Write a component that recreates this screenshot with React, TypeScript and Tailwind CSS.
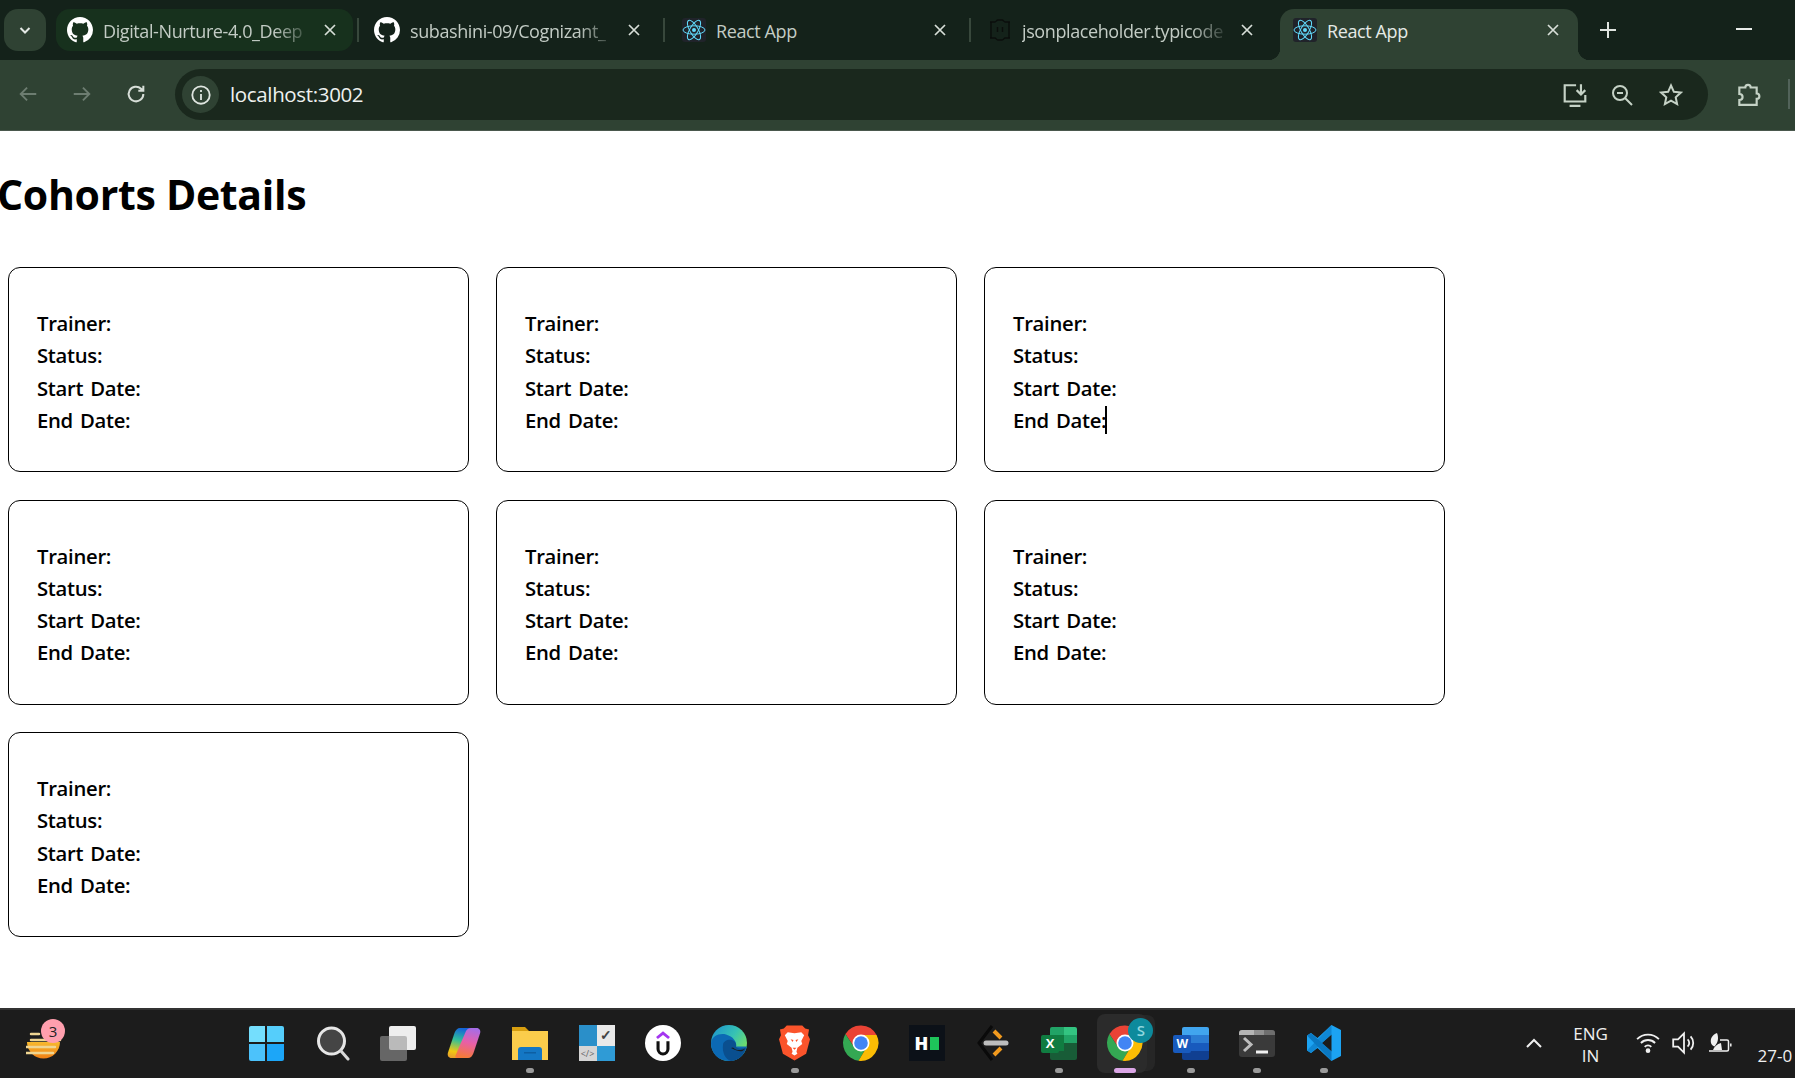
import type { ReactNode } from "react";

const FONT = "font-['Open_Sans','Noto_Sans',sans-serif]";

function GithubIcon() {
  return (
    <svg viewBox="0 0 16 16" className="h-[26px] w-[26px] shrink-0" fill="#fff">
      <path d="M8 0C3.58 0 0 3.58 0 8c0 3.54 2.29 6.53 5.47 7.59.4.07.55-.17.55-.38 0-.19-.01-.82-.01-1.49-2.01.37-2.53-.49-2.69-.94-.09-.23-.48-.94-.82-1.13-.28-.15-.68-.52-.01-.53.63-.01 1.08.58 1.23.82.72 1.21 1.87.87 2.33.66.07-.52.28-.87.51-1.07-1.78-.2-3.64-.89-3.64-3.95 0-.87.31-1.59.82-2.15-.08-.2-.36-1.02.08-2.12 0 0 .67-.21 2.2.82.64-.18 1.32-.27 2-.27s1.36.09 2 .27c1.53-1.04 2.2-.82 2.2-.82.44 1.1.16 1.92.08 2.12.51.56.82 1.27.82 2.15 0 3.07-1.87 3.75-3.65 3.95.29.25.54.73.54 1.48 0 1.07-.01 1.93-.01 2.2 0 .21.15.46.55.38A8.01 8.01 0 0 0 16 8c0-4.42-3.58-8-8-8z" />
    </svg>
  );
}

function ReactIcon() {
  return (
    <span className="flex h-6 w-6 shrink-0 items-center justify-center rounded-[3px] bg-[#20232a]">
      <svg viewBox="-12 -12 24 24" className="h-6 w-6" fill="none" stroke="#61dafb" strokeWidth="1">
        <circle r="2" fill="#61dafb" stroke="none" />
        <ellipse rx="11" ry="4.2" />
        <ellipse rx="11" ry="4.2" transform="rotate(60)" />
        <ellipse rx="11" ry="4.2" transform="rotate(120)" />
      </svg>
    </span>
  );
}

function JsonIcon() {
  return (
    <svg viewBox="0 0 24 24" className="h-6 w-6 shrink-0" fill="none" stroke="#0b0e0c" strokeWidth="1.4">
      <path d="M2 4h5c1 0 1.500-2 3-2h4c1.500 0 2 2 3 2h5M2 20h5c1 0 1.500 2 3 2h4c1.500 0 2-2 3-2h5" />
      <path d="M3 4v16M21 4v16M9.500 9v5M14.500 9v5" />
    </svg>
  );
}

function CloseIcon() {
  return (
    <svg viewBox="0 0 16 16" className="h-4 w-4 shrink-0" fill="none" stroke="#d7ded8" strokeWidth="1.7">
      <path d="M3 3l10 10M13 3L3 13" />
    </svg>
  );
}

function Tab({
  icon,
  title,
  className,
  active,
  clipped,
}: {
  icon: ReactNode;
  title: string;
  className: string;
  active?: boolean;
  clipped?: boolean;
}) {
  return (
    <div className={`relative flex items-center ${className}`}>
      {icon}
      <span
        className={`ml-[10px] mt-[2px] min-w-0 flex-1 overflow-hidden whitespace-nowrap text-[18px] tracking-[-0.4px] ${
          active ? "text-[#e5eae6]" : "text-[#c3ccc5]"
        } ${clipped ? "[mask-image:linear-gradient(to_right,black_78%,transparent_96%)]" : ""}`}
      >
        {title}
      </span>
      <CloseIcon />
      {active && (
        <>
          <span className="absolute -left-[12px] bottom-0 h-3 w-3 bg-[radial-gradient(circle_at_0_0,#14221a_12px,#2f4233_12.5px)]" />
          <span className="absolute -right-[12px] bottom-0 h-3 w-3 bg-[radial-gradient(circle_at_100%_0,#14221a_12px,#2f4233_12.5px)]" />
        </>
      )}
    </div>
  );
}

function Sep() {
  return <div className="mt-[9px] h-[24px] w-[2px] shrink-0 bg-[#38483c]" />;
}

function TabStrip() {
  return (
    <div className="flex h-[60px] items-start bg-[#14221a] pt-[9px]">
      <div className="ml-1 flex h-[42px] w-[42px] items-center justify-center rounded-[14px] bg-[#2f4233]">
        <svg viewBox="0 0 16 16" className="h-4 w-4" fill="none" stroke="#e4e9e5" strokeWidth="2">
          <path d="M3.500 6l4.500 4.500L12.500 6" />
        </svg>
      </div>
      <Tab
        icon={<GithubIcon />}
        title="Digital-Nurture-4.0_Deep"
        clipped
        className="ml-[10px] h-[42px] w-[297px] rounded-[14px] bg-[#17311d] pl-[11px] pr-[15px]"
      />
      <div className="ml-[4px]"><Sep /></div>
      <Tab
        icon={<GithubIcon />}
        title="subashini-09/Cognizant_"
        clipped
        className="h-[42px] w-[304px] pl-[15px] pr-[21px]"
      />
      <Sep />
      <Tab
        icon={<ReactIcon />}
        title="React App"
        className="h-[42px] w-[304px] pl-[17px] pr-[21px]"
      />
      <Sep />
      <Tab
        icon={<JsonIcon />}
        title="jsonplaceholder.typicode"
        clipped
        className="h-[42px] w-[311px] pl-[17px] pr-[27px]"
      />
      <Tab
        icon={<ReactIcon />}
        title="React App"
        active
        className="-ml-[2px] h-[51px] w-[298px] rounded-t-[14px] bg-[#2f4233] pb-[9px] pl-[13px] pr-[17px]"
      />
      <svg viewBox="0 0 20 20" className="ml-[20px] mt-[11px] h-5 w-5" fill="none" stroke="#dfe5e0" strokeWidth="2">
        <path d="M10 2v16M2 10h16" />
      </svg>
      <div className="ml-[118px] mt-[19px] h-[2px] w-[16px] bg-[#e8ece9]" />
    </div>
  );
}

function Toolbar() {
  return (
    <div className="flex h-[71px] items-start border-b border-b-[#4a584d] bg-[#2f4233] pt-[9px]">
      <svg viewBox="0 0 24 24" className="ml-[17px] mt-[14px] h-[22px] w-[22px]" fill="none" stroke="#6d7d71" strokeWidth="2">
        <path d="M21 12H4M11 5l-7 7 7 7" />
      </svg>
      <svg viewBox="0 0 24 24" className="ml-[32px] mt-[14px] h-[22px] w-[22px]" fill="none" stroke="#6d7d71" strokeWidth="2">
        <path d="M3 12h17M13 5l7 7-7 7" />
      </svg>
      <svg viewBox="0 0 24 24" className="ml-[32px] mt-[14px] h-[22px] w-[22px]" fill="none" stroke="#d7ded8" strokeWidth="2.2">
        <path d="M20 12a8 8 0 1 1-2.500-5.800L20 8.500M20 3v5.500h-5.500" />
      </svg>
      <div className="ml-[28px] flex h-[51px] w-[1533px] items-center rounded-full bg-[#1a281d] pl-[7px] pr-[25px]">
        <div className="flex h-[37px] w-[37px] items-center justify-center rounded-full bg-[#2f4233]">
          <svg viewBox="0 0 24 24" className="h-[22px] w-[22px]" fill="none" stroke="#dfe5e0" strokeWidth="2">
            <circle cx="12" cy="12" r="9.500" />
            <path d="M12 11v6.500M12 6.500v2.200" />
          </svg>
        </div>
        <span className="ml-[11px] flex-1 text-[20.5px] tracking-[-0.35px] text-[#eef1ef]">localhost:3002</span>
        <svg viewBox="0 0 24 24" className="h-[26px] w-[26px]" fill="none" stroke="#c5d2c6" strokeWidth="2">
          <path d="M13 3H2.500v15h19v-6M7 22h10M17.500 2v9M13.500 7.500l4 4 4-4" />
        </svg>
        <svg viewBox="0 0 24 24" className="ml-[22px] h-[24px] w-[24px]" fill="none" stroke="#c5d2c6" strokeWidth="2">
          <circle cx="10" cy="10" r="7" />
          <path d="M15 15l7 7M7 10h6" />
        </svg>
        <svg viewBox="0 0 24 24" className="ml-[25px] h-[24px] w-[24px]" fill="none" stroke="#c5d2c6" strokeWidth="2">
          <path d="M12 2.500l2.900 6.300 6.900.8-5.100 4.700 1.400 6.800-6.100-3.400-6.100 3.400 1.400-6.800-5.100-4.700 6.900-.8z" />
        </svg>
      </div>
      <svg viewBox="0 0 24 24" className="ml-[27px] mt-[12px] h-[26px] w-[26px]" fill="none" stroke="#c5d2c6" strokeWidth="2">
        <path d="M4 6h5.500a2.500 2.500 0 0 1 5 0H20v5.500a2.500 2.500 0 0 1 0 5V22H4v-4.500c2 0 3-1.300 3-2.800S6 12 4 12z" />
      </svg>
      <div className="ml-[27px] mt-[10px] h-[30px] w-[2px] bg-[#52635a]" />
    </div>
  );
}

function CohortCard({ caret }: { caret?: boolean }) {
  return (
    <div className="h-[205px] rounded-xl border border-black pl-[28px] pt-[39px] text-[20.3px] font-semibold leading-[32.3px] tracking-[-0.3px] text-black [word-spacing:2px]">
      <div>Trainer:</div>
      <div>Status:</div>
      <div>Start Date:</div>
      <div className="flex items-center">
        End Date:
        {caret && <span className="-ml-px h-[28px] w-[2px] bg-black" />}
      </div>
    </div>
  );
}

function Page() {
  return (
    <main className="flex-1 overflow-hidden bg-white">
      <h1 className="-ml-[3px] mt-[35px] text-[41px] font-bold leading-[57px] tracking-[-0.3px] text-black">Cohorts Details</h1>
      <div className="mt-[44px] grid grid-cols-[repeat(3,461px)] gap-x-[27px] gap-y-[27.5px] pl-2">
        <CohortCard />
        <CohortCard />
        <CohortCard caret />
        <CohortCard />
        <CohortCard />
        <CohortCard />
        <CohortCard />
      </div>
    </main>
  );
}

function WindowsLogo() {
  return (
    <div className="grid h-[35px] w-[35px] grid-cols-2 gap-[2px]">
      <div className="rounded-tl-[2px] bg-[#74defd]" />
      <div className="rounded-tr-[2px] bg-[#55cefb]" />
      <div className="rounded-bl-[2px] bg-[#4cc2fb]" />
      <div className="rounded-br-[2px] bg-[#1ca6f8]" />
    </div>
  );
}

function ChromeLogo() {
  return (
    <svg viewBox="0 0 36 36" className="h-[36px] w-[36px]">
      <path d="M18 10h15.600A18 18 0 0 0 2.400 9L11 22z" fill="#ea4335" />
      <path d="M2.400 9a18 18 0 0 0 13.100 26.800L22 25l-11-3z" fill="#34a853" />
      <path d="M33.600 10a18 18 0 0 1-18.100 25.800L22 25l3-11-7-4z" fill="#fbbc04" />
      <circle cx="18" cy="18" r="8.500" fill="#fff" />
      <circle cx="18" cy="18" r="6.800" fill="#4285f4" />
    </svg>
  );
}

const taskItems: { key: string; dot?: boolean; node: ReactNode }[] = [
  { key: "start", node: <WindowsLogo /> },
  {
    key: "search",
    node: (
      <svg viewBox="0 0 36 36" className="h-[36px] w-[36px]" fill="none">
        <circle cx="17.500" cy="16" r="13" fill="#454545" stroke="#e6e6e6" strokeWidth="3" />
        <path d="M27 26l7 8" stroke="#d8d8d8" strokeWidth="3" strokeLinecap="round" />
      </svg>
    ),
  },
  {
    key: "taskview",
    node: (
      <div className="relative h-[35px] w-[36px]">
        <div className="absolute right-0 top-0 h-[24px] w-[27px] rounded-[2px] bg-[#eeeeee]" />
        <div className="absolute bottom-0 left-0 h-[25px] w-[27px] rounded-[2px] bg-[#989898]/60" />
      </div>
    ),
  },
  {
    key: "copilot",
    node: (
      <svg viewBox="0 0 36 36" className="h-[36px] w-[36px]">
        <defs>
          <linearGradient id="cpa" x1="0.5" y1="0" x2="0.3" y2="1">
            <stop offset="0" stopColor="#1463d8" />
            <stop offset="0.4" stopColor="#2fbf9a" />
            <stop offset="0.8" stopColor="#f2c811" />
            <stop offset="1" stopColor="#e8a02c" />
          </linearGradient>
          <linearGradient id="cpb" x1="0.5" y1="0" x2="0.3" y2="1">
            <stop offset="0" stopColor="#f57a3a" />
            <stop offset="0.5" stopColor="#e85fa8" />
            <stop offset="1" stopColor="#a46de8" />
          </linearGradient>
        </defs>
        <path d="M14 3h11c1.500 0 2 1 1.500 2.500L16 30c-1 2-3 3-5 3H5.500c-3 0-4.500-2.500-3.500-5.500L8.500 8c1-3 3-5 5.500-5z" fill="url(#cpa)" />
        <path d="M14 3h11c1.500 0 2 1 1.500 2.500L16 30c-1 2-3 3-5 3H5.500c-3 0-4.500-2.500-3.500-5.500L8.500 8c1-3 3-5 5.500-5z" fill="url(#cpb)" transform="rotate(180 18 18)" />
      </svg>
    ),
  },
  {
    key: "explorer",
    dot: true,
    node: (
      <svg viewBox="0 0 36 36" className="h-[36px] w-[36px]">
        <path d="M0 2h13l4 4v6H0z" fill="#d79e0f" />
        <path d="M0 6h36v29H0z" fill="#fbcd4b" />
        <path d="M6 25c0-2 1-3 3-3h18c2 0 3 1 3 3v10H6z" fill="#1477c4" />
        <path d="M12 27h12v1.500H12z" fill="#0d5fa3" />
      </svg>
    ),
  },
  {
    key: "devtool",
    node: (
      <div className="grid h-[36px] w-[36px] grid-cols-2">
        <div className="bg-[#2a8fc9]" />
        <div className="flex items-center justify-center bg-[#e9e9e9] text-[14px] font-bold leading-none text-[#444]">✓</div>
        <div className="flex items-center justify-center bg-[#d5d5d5] text-[9px] leading-none text-[#666]">&lt;/&gt;</div>
        <div className="bg-[#2f9bd6]" />
      </div>
    ),
  },
  {
    key: "udemy",
    node: (
      <div className="flex h-[36px] w-[36px] flex-col items-center justify-center rounded-full bg-white">
        <svg viewBox="0 0 20 24" className="h-[27px] w-[22px]" fill="none">
          <path d="M4.500 7l5.500-4.500L15.500 7" stroke="#a435f0" strokeWidth="2.600" />
          <path d="M5.500 10v7a4.500 4.500 0 0 0 9 0v-7" stroke="#111" strokeWidth="2.800" />
        </svg>
      </div>
    ),
  },
  {
    key: "edge",
    node: (
      <svg viewBox="0 0 36 36" className="h-[36px] w-[36px]">
        <defs>
          <linearGradient id="edg" x1="0" y1="0" x2="1" y2="0.7">
            <stop offset="0" stopColor="#1a8fd0" />
            <stop offset="0.55" stopColor="#36c2b4" />
            <stop offset="1" stopColor="#7de35b" />
          </linearGradient>
        </defs>
        <circle cx="18" cy="18" r="18" fill="url(#edg)" />
        <path d="M0 18C1 11 8 8 15 9.500c7 2 11 7 10 12h11C34 30 27 36 18 36 7 36 0 28 0 18z" fill="#0c69b4" />
        <path d="M12 20c0-4 5-6 9-5 3 1 5 4 4 7 3 2 7 2 10 .5C33 31 26 36 20 36c-6-2-9-9-8-16z" fill="#0a4f8f" />
        <path d="M22 22.500c2.500 3 8 3.500 12 1-1 1-2 6-14-.5z" fill="#1c1c1c" />
      </svg>
    ),
  },
  {
    key: "brave",
    dot: true,
    node: (
      <svg viewBox="0 0 32 36" className="h-[36px] w-[31px]">
        <path d="M8 0h16l3 3 4 1-1 6 2 4-4 15-12 7-12-7-4-15 2-4-1-6 4-1z" fill="#fb542b" />
        <path d="M16 8l-7-1-3 3 3 6-1 3 5 4 1 4-1 2 3 2 3-2-1-2 1-4 5-4-1-3 3-6-3-3z" fill="#fff" />
        <path d="M12 14l3 1-1 2zM20 14l-3 1 1 2zM14 23h4l-2 2z" fill="#fb542b" />
      </svg>
    ),
  },
  { key: "chrome", node: <ChromeLogo /> },
  {
    key: "hackerrank",
    node: (
      <div className="flex h-[36px] w-[36px] items-center justify-center gap-[2px] bg-[#0c1118]">
        <span className="text-[18px] font-extrabold leading-none text-white">H</span>
        <span className="h-[13px] w-[9px] bg-[#1ec45a]" />
      </div>
    ),
  },
  {
    key: "sublime",
    node: (
      <svg viewBox="0 0 36 36" className="h-[36px] w-[36px]" fill="none">
        <path d="M17 1L4 18l13 17" stroke="#0a0a0a" strokeWidth="3" />
        <path d="M19 6l7 7M19 30l7-7" stroke="#f29a1e" strokeWidth="4" />
        <path d="M11 18h20" stroke="#bdbdbd" strokeWidth="5" strokeLinecap="round" />
      </svg>
    ),
  },
  {
    key: "excel",
    dot: true,
    node: (
      <div className="relative h-[33px] w-[36px]">
        <div className="absolute right-0 top-0 grid h-full w-[27px] grid-cols-2 grid-rows-4 overflow-hidden rounded-[2px]">
          <div className="bg-[#21a366]" />
          <div className="bg-[#33c481]" />
          <div className="bg-[#107c41]" />
          <div className="bg-[#21a366]" />
          <div className="bg-[#107c41]" />
          <div className="bg-[#185c37]" />
          <div className="bg-[#185c37]" />
          <div className="bg-[#185c37]" />
        </div>
        <div className="absolute left-0 top-[8px] flex h-[18px] w-[18px] items-center justify-center rounded-[2px] bg-[#107c41] text-[13px] font-bold leading-none text-white">X</div>
      </div>
    ),
  },
  {
    key: "active-chrome",
    node: (
      <div className="relative flex h-[36px] w-[36px] items-center justify-center">
        <ChromeLogo />
        <div className="absolute -right-[10px] -top-[7px] flex h-[25px] w-[25px] items-center justify-center rounded-full bg-[#0d8a9c] text-[15px] font-semibold leading-none text-[#8fd6df]">S</div>
      </div>
    ),
  },
  {
    key: "word",
    dot: true,
    node: (
      <div className="relative h-[33px] w-[36px]">
        <div className="absolute right-0 top-0 grid h-full w-[27px] grid-rows-4 overflow-hidden rounded-[2px]">
          <div className="bg-[#41a5ee]" />
          <div className="bg-[#2b7cd3]" />
          <div className="bg-[#185abd]" />
          <div className="bg-[#103f91]" />
        </div>
        <div className="absolute left-0 top-[8px] flex h-[18px] w-[18px] items-center justify-center rounded-[2px] bg-[#185abd] text-[12px] font-bold leading-none text-white">W</div>
      </div>
    ),
  },
  {
    key: "terminal",
    dot: true,
    node: (
      <div className="flex h-[27px] w-[36px] flex-col overflow-hidden rounded-[3px] bg-[#3a3a3a]">
        <div className="flex h-[5px]">
          <div className="w-[15px] bg-[#b5b5b5]" />
          <div className="w-[10px] bg-[#8f8f8f]" />
          <div className="flex-1 bg-[#6e6e6e]" />
        </div>
        <svg viewBox="0 0 36 22" className="h-[22px] w-[36px]" fill="none">
          <path d="M5 3l7 6.500-7 6.500" stroke="#bdbdbd" strokeWidth="3" />
          <path d="M17 17h12" stroke="#f1f1f1" strokeWidth="3" />
        </svg>
      </div>
    ),
  },
  {
    key: "vscode",
    dot: true,
    node: (
      <svg viewBox="0 0 36 36" className="h-[36px] w-[36px]">
        <path
          d="M25.500 0L35 5v26l-9.500 5-14-13L5 28l-4-2.500v-15L5 8l6.500 5zM25.500 9.500L15.500 18l10 8.500z"
          fill="#1ca3f2"
          fillRule="evenodd"
        />
        <path d="M25.500 0v9.500L5 28l-4-2.500z" fill="#0f87d4" />
        <path d="M25.500 36v-9.500L5 8l-4 2.500z" fill="#0a78c2" />
      </svg>
    ),
  },
];

function Taskbar() {
  return (
    <footer className="flex h-[70px] items-start border-t-2 border-t-[#333333] bg-[#1c1c1c]">
      <div className="relative ml-[26px] mt-[17px] h-[36px] w-[36px]">
        <svg viewBox="0 0 36 36" className="h-[36px] w-[36px]" fill="none">
          <defs>
            <linearGradient id="wdg" x1="0" y1="0" x2="0" y2="1">
              <stop offset="0" stopColor="#f8b92e" />
              <stop offset="1" stopColor="#f07f14" />
            </linearGradient>
          </defs>
          <path d="M1 15a16.500 16.500 0 0 0 33 0z" fill="url(#wdg)" />
          <path d="M5 7h8M5 13h29M0 20h29M0 26h27" stroke="#efd592" strokeWidth="2.500" strokeLinecap="round" />
        </svg>
        <div className="absolute -right-[3px] -top-[8px] flex h-[24px] w-[24px] items-center justify-center rounded-full bg-[#ff9fae] text-[15px] leading-none text-[#222]">3</div>
      </div>
      <div className="ml-[171px] flex">
        {taskItems.map((item) => (
          <div key={item.key} className="relative flex h-[68px] w-[66.1px] items-center justify-center pb-[2px]">
            {item.key === "active-chrome" && (
              <>
                <div className="absolute bottom-[7px] left-[10px] right-[3px] top-[5px] rounded-[8px] bg-[#262626]" />
                <div className="absolute bottom-[5px] left-[5px] right-[11px] top-[4px] rounded-[8px] bg-[#2b2b2b]" />
              </>
            )}
            <div className="relative">{item.node}</div>
            {item.dot && <span className="absolute bottom-[5px] h-[5px] w-[8px] rounded-full bg-[#9a9a9a]" />}
            {item.key === "active-chrome" && (
              <span className="absolute bottom-[5px] h-[5px] w-[22px] rounded-full bg-[#dba6e6]" />
            )}
          </div>
        ))}
      </div>
      <div className="ml-[168px] mt-[27px]">
        <svg viewBox="0 0 18 12" className="h-3 w-[18px]" fill="none" stroke="#f0f0f0" strokeWidth="2">
          <path d="M2 10l7-7 7 7" />
        </svg>
      </div>
      <div className="ml-[28px] mt-[13px] w-[40px] text-center text-[17px] leading-[22px] text-[#f0f0f0]">
        <div>ENG</div>
        <div>IN</div>
      </div>
      <svg viewBox="1 3 22 19" className="ml-[25px] mt-[21px] h-6 w-6" fill="none" stroke="#f0f0f0" strokeWidth="1.700">
        <path d="M2 9a14 14 0 0 1 20 0M5.500 12.500a9 9 0 0 1 13 0M9 16a4 4 0 0 1 6 0" />
        <circle cx="12" cy="19.500" r="1.300" fill="#f0f0f0" />
      </svg>
      <svg viewBox="2 2 20 20" className="ml-[12px] mt-[21px] h-6 w-6" fill="none" stroke="#f0f0f0" strokeWidth="1.500">
        <path d="M3 9v6h4l5 5V4L7 9zM15 9a4 4 0 0 1 0 6M17.500 6.500a8 8 0 0 1 0 11" />
      </svg>
      <svg viewBox="0 0 24 24" className="ml-[12px] mt-[21px] h-6 w-6" fill="none" stroke="#f0f0f0" strokeWidth="1.500">
        <path d="M12 9h7a1.500 1.500 0 0 1 1.500 1.500v8a1.500 1.500 0 0 1-1.500 1.500H1M22.800 12.500v3" />
        <path d="M9 2C4 4 2 8 3 12c.5 2 2 3 3.500 3.500C10 12 11 7 9 2zM5 19c1-3 4-6 8-7l1 7z" fill="#f0f0f0" stroke="none" />
      </svg>
      <span className="ml-[26px] mt-[34px] whitespace-nowrap text-[17px] leading-[24px] text-[#f0f0f0]">27-0</span>
    </footer>
  );
}

export default function App() {
  return (
    <div className={`flex h-[1078px] w-[1795px] flex-col overflow-hidden ${FONT}`}>
      <TabStrip />
      <Toolbar />
      <Page />
      <Taskbar />
    </div>
  );
}
